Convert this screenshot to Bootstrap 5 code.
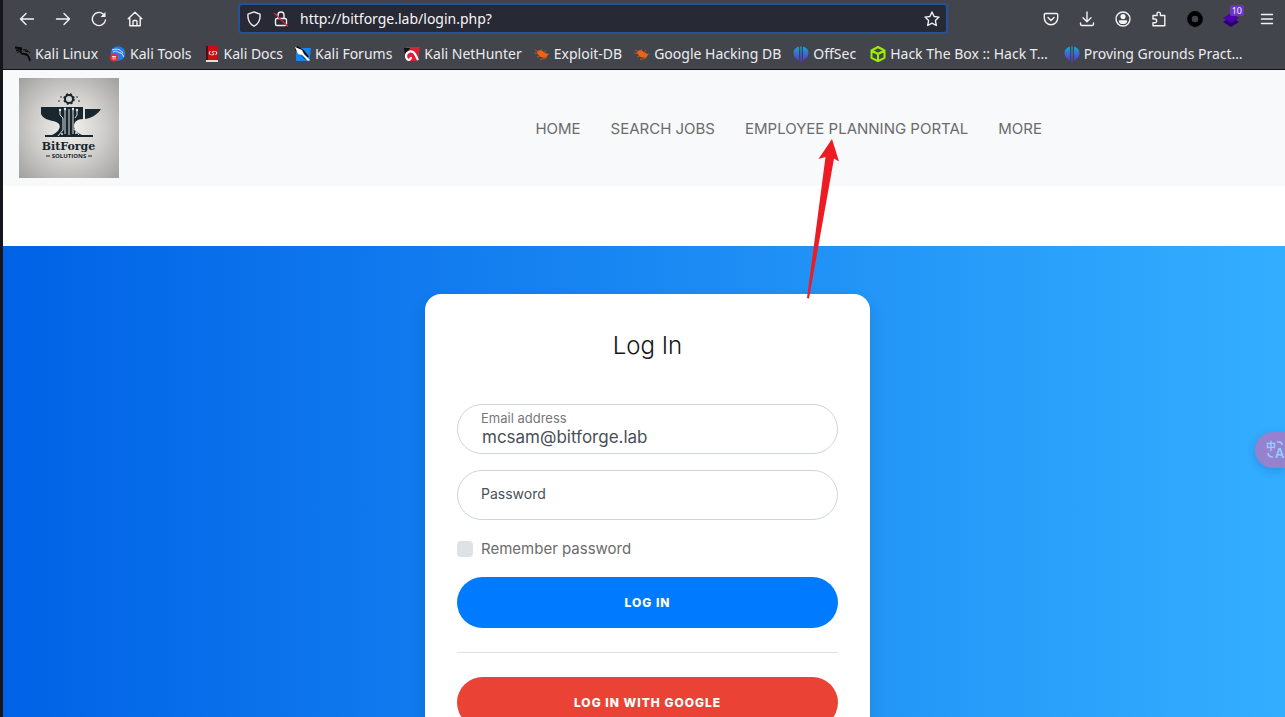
<!DOCTYPE html>
<html lang="en">
<head>
<meta charset="utf-8">
<meta name="viewport" content="width=device-width, initial-scale=1">
<title>BitForge Solutions - Log In</title>
<link rel="stylesheet" href="https://cdn.jsdelivr.net/npm/bootstrap@5.3.0/dist/css/bootstrap.min.css">
<style>
  body { font-family: Inter, sans-serif; color: #6b6b6b; }
  .window-frame { border-left: 3px solid #15161c; }
  .chrome { background: #42454c; border-bottom: 1px solid #111216; font-family: "Noto Sans", sans-serif; color: #f0f0f0; }
  .toolbar { height: 37px; padding: 3px 6px 3px 12px; }
  .tools { column-gap: 12px; }
  .tool { width: 24px; height: 30px; border: 0; padding: 0; background: none; color: #f3f3f4; display: flex; align-items: center; justify-content: center; position: relative; }
  .tool svg, .address svg { width: 16px; height: 16px; }
  svg.line { fill: none; stroke: currentColor; stroke-width: 1.4; stroke-linecap: round; stroke-linejoin: round; }
  .address { height: 31px; margin-left: 91px; margin-right: 91px; padding: 0 6px; gap: 11px; border: 2px solid #24509c; border-radius: 4px; background: #272935; }
  .address input { background: none; border: 0; outline: 0; color: #f6f6f7; font-size: 14px; padding: 0; min-width: 0; }
  .counter { position: absolute; top: 1px; right: -1px; background: #6c35c5; border-radius: 2px; font-size: 9px; line-height: 11px; padding: 0 2px; }
  .bookmarks { height: 32px; padding: 2px 12px 0; gap: 12px; font-size: 14px; line-height: 20px; white-space: nowrap; }
  .bookmarks a { color: #ececee; text-decoration: none; display: flex; align-items: center; gap: 4px; }
  .bookmarks svg { width: 16px; height: 16px; flex: none; }
  .bookmarks .wide { margin: 0 4px 0 2px; }
  .site-nav { background: #f8f9fb; padding: 8px 228px 8px 16px; }
  .logo { width: 100px; height: 100px; display: block; }
  .site-nav .nav-link { color: #6b6b6b; font-size: 15px; line-height: 24px; padding: 9px 15px 7px; }
  .hero { margin-top: 60px; background: linear-gradient(to right, #0062e6, #33aeff); padding: 48px 0 48px 7px; }
  .login-card { width: 445px; border: 0; border-radius: 16px; box-shadow: 0 8px 16px rgba(0,0,0,.12); padding: 32px; }
  .login-card h1 { font-size: 24px; line-height: 40px; font-weight: 300; color: #161616; margin-bottom: 38px; }
  .pill { position: relative; height: 50px; margin-bottom: 16px; }
  .pill input { height: 50px; border: 1px solid #ced4da; border-radius: 32px; padding: 16px 24px 0; font-size: 17px; color: #495057; }
  .pill label { position: absolute; left: 24px; top: 5px; font-size: 13px; line-height: 18px; color: #777; }
  .pill label.resting { top: 14px; font-size: 14px; line-height: 20px; color: #495057; }
  .remember { font-size: 15px; line-height: 26px; margin-bottom: 15px; gap: 8px; }
  .remember input { appearance: none; width: 16px; height: 16px; border-radius: 4px; background: #dee2e6; margin: 0; }
  .remember input:checked { background: #007bff; }
  .action { height: 51px; border: 0; border-radius: 32px; font-size: 12px; font-weight: 800; letter-spacing: 1px; color: #fff; background: #007bff; }
  .action.google { background: #ea4335; }
  .rule { margin: 24px 0; border-color: #888; }
  .arrow { position: absolute; left: 807px; top: 139px; width: 32px; height: 160px; pointer-events: none; }
  .translate { position: absolute; right: 0; top: 432px; width: 30px; height: 36px; border: 0; border-radius: 18px 0 0 18px; padding: 0 0 0 11px; background: #9681cf; box-shadow: 0 3px 10px rgba(0,40,120,.2); overflow: hidden; }
</style>
</head>
<body>
<svg width="0" height="0" class="position-absolute" aria-hidden="true">
  <defs>
    <linearGradient id="offsec" x2="0" y2="1"><stop stop-color="#13a9ca"/><stop offset="1" stop-color="#642bd4"/></linearGradient>
    <radialGradient id="metal" r=".7"><stop stop-color="#f5f4f1"/><stop offset=".5" stop-color="#cfcecb"/><stop offset="1" stop-color="#a0a09f"/></radialGradient>
    <symbol id="os" viewBox="0 0 16 16"><path fill="url(#offsec)" d="M6 .8v13.700C2.500 12.500 .5 10.500 .5 7S3 1.500 6 .8zM7.300 .5h1.400V16H7.300zM10 .8v13.700c3.500-2 5.500-4 5.500-7.500S13 1.500 10 .8z"/></symbol>
    <symbol id="bug" viewBox="0 0 16 16"><path fill="#ed6512" d="M3 6c2-3 5-2 8 1 2 0 3 1 3 2-1 2-3 3-5 2.500C6 11.500 4 9 3 6z"/><path d="M1 4l4 2M0 7l5 .5M3 11l4-1.500M6 13.500l6-1.500M13 12l-2-2M12 4l-2 3M15.500 8l-3 .500M7 3l1 3" stroke="#d96020" stroke-width=".7"/></symbol>
  </defs>
</svg>
<div class="window-frame vh-100 overflow-hidden d-flex flex-column">
  <header class="chrome">
    <div class="toolbar d-flex align-items-center">
      <div class="tools d-flex">
        <button class="tool" aria-label="Back"><svg class="line" viewBox="0 0 16 16"><path d="M14.500 8H1.500M7 2.500L1.500 8 7 13.500"/></svg></button>
        <button class="tool" aria-label="Forward"><svg class="line" viewBox="0 0 16 16"><path d="M1.500 8h13M9 2.500L14.500 8 9 13.500"/></svg></button>
        <button class="tool" aria-label="Reload"><svg class="line" viewBox="0 0 16 16"><path d="M14.500 9A6.600 6.600 0 1 1 12.500 3.200"/><path d="M14.500 1v5h-5z" fill="currentColor" stroke="none"/></svg></button>
        <button class="tool" aria-label="Home"><svg class="line" viewBox="0 0 16 16"><path d="M1.200 7.800L8 1.200l6.800 6.600M2.800 7v7.800h10.400V7M6 14.500v-4a1 1 0 0 1 1-1h2a1 1 0 0 1 1 1v4"/></svg></button>
      </div>
      <div class="address d-flex align-items-center flex-grow-1">
        <svg class="line" viewBox="0 0 16 16"><path d="M8 .9l6 2.300c.5 5-1 9.300-6 12-5-2.700-6.500-7-6-12z"/></svg>
        <svg class="line" viewBox="0 0 16 16"><rect x="2.500" y="7.500" width="11" height="7" rx="1.500"/><path d="M5 7V4a3 3 0 0 1 6 0v3"/><path d="M1.500 2.500l13 12.500" stroke="#e2204b"/></svg>
        <input class="flex-grow-1" type="text" value="http://bitforge.lab/login.php?" aria-label="Address">
        <svg class="line" viewBox="0 0 16 16"><path d="M8 1l2.100 4.500 4.900.6-3.600 3.400.9 5L8 12.100l-4.300 2.400.9-5L1 6.100l4.900-.6z"/></svg>
      </div>
      <div class="tools d-flex">
        <button class="tool" aria-label="Pocket"><svg class="line" viewBox="0 0 16 16"><path d="M2.500 2.500h11a1.200 1.200 0 0 1 1.200 1.200V7a6.700 6.700 0 0 1-13.400 0V3.700a1.200 1.200 0 0 1 1.200-1.200zM5 6.500l3 3 3-3"/></svg></button>
        <button class="tool" aria-label="Downloads"><svg class="line" viewBox="0 0 16 16"><path d="M8 1v9.500M4 6.800l4 4 4-4M1.500 12v1a1.500 1.500 0 0 0 1.500 1.500h10a1.500 1.500 0 0 0 1.500-1.500v-1"/></svg></button>
        <button class="tool" aria-label="Account"><svg class="line" viewBox="0 0 16 16"><circle cx="8" cy="8" r="7"/><circle cx="8" cy="5.600" r="1.900" fill="currentColor"/><path fill="currentColor" d="M4.500 9.900h7c0 1.600-1.700 2.400-3.500 2.400s-3.500-.8-3.500-2.400z"/></svg></button>
        <button class="tool" aria-label="Extensions"><svg class="line" viewBox="0 0 16 16"><path d="M2 7V4.500h4V2.800a1.700 1.700 0 0 1 3.400 0v1.700h4.400v10.300H2v-3h1.800a1.800 1.800 0 0 0 0-3.800H2z"/></svg></button>
        <button class="tool" aria-label="Proxy"><svg viewBox="0 0 16 16"><circle cx="8" cy="8" r="5.600" fill="none" stroke="#000" stroke-width="4.600"/></svg></button>
        <button class="tool" aria-label="Technology profiler"><svg viewBox="0 0 16 16"><path fill="#280071" d="M0 11l8-5 8 5-8 5z"/><path fill="#4c00b0" d="M0 7l8-5 8 5-8 5z"/></svg><span class="counter">10</span></button>
        <button class="tool" aria-label="Menu"><svg class="line" viewBox="0 0 16 16"><path d="M2.500 3.500h11M2.500 8h11M2.500 12.500h11"/></svg></button>
      </div>
    </div>
    <nav class="bookmarks d-flex align-items-center">
      <a href="#"><svg viewBox="0 0 16 16" fill="none" stroke="#080808"><path d="M0 1.500l7 1M1 4.500l6-1.500M6 2.500C5 6 6 8 9 8c4 0 5 3 6 7" stroke-width="1.800"/><path d="M8 4c3-1 5 1 7 3M10 5l3 .5M2 6.500L6 5"/></svg>Kali Linux</a>
      <a href="#"><svg viewBox="0 0 16 16"><circle cx="8" cy="7.500" r="7.300" fill="#2b78ee"/><path d="M2 4c6-2 9 0 11 3M3 6c4-2 5 1 8 1 2 1 2 3 3 4" fill="none" stroke="#d9eaff"/><circle cx="4" cy="11.500" r="4" fill="#e52e32"/><path d="M2 10.500h4M3.200 10.500v3M5 10.500v3" stroke="#fff" stroke-width=".8"/></svg>Kali Tools</a>
      <a href="#"><svg viewBox="0 0 16 16"><path fill="#c90e13" d="M2 0h12v14H2z"/><path fill="#520b0d" d="M2 0h2v14H2z"/><path fill="#e4dede" d="M2 14h12v2H2z"/><path d="M6.500 5L5 7l1.500 2M11.500 5L13 7l-1.500 2M10.500 5.500C7.500 5 8 7 9 7s1.500 2.500-1.500 1.800" fill="none" stroke="#fff"/></svg>Kali Docs</a>
      <a href="#"><svg viewBox="0 0 16 16"><path fill="#1684ef" d="M1 2h15l-1.500 13H1z"/><path d="M1 2l6 4 5 6" fill="none" stroke="#111" stroke-width="5"/><path fill="#fff" d="M0 1l7 3 2 4 6 6-2 1-6-6-4-1z"/></svg>Kali Forums</a>
      <a href="#"><svg viewBox="0 0 16 16"><path fill="#d92235" d="M3 1h13l-2 14H3z"/><path fill="#111" d="M0 2h6L4 6 1 9z"/><path d="M3 13C0 8 5 4 9 6c2 1 3 4 5 8M3 13c2 2 4 0 4-2" fill="none" stroke="#fff" stroke-width="2.200"/></svg>Kali NetHunter</a>
      <a href="#"><svg><use href="#bug"/></svg>Exploit-DB</a>
      <a href="#"><svg><use href="#bug"/></svg>Google Hacking DB</a>
      <a href="#"><svg><use href="#os"/></svg>OffSec</a>
      <a href="#" class="wide"><svg viewBox="0 0 16 16" fill="none" stroke="#9fef00" stroke-width="2" stroke-linejoin="round"><path d="M8 1l6.500 3.500v7.300L8 15.200l-6.500-3.400V4.500zM1.500 4.500L8 8l6.500-3.500M8 8v7"/></svg>Hack The Box :: Hack T…</a>
      <a href="#"><svg><use href="#os"/></svg>Proving Grounds Pract…</a>
    </nav>
  </header>

  <nav class="site-nav d-flex align-items-center">
    <a href="#" aria-label="BitForge Solutions">
      <svg class="logo" viewBox="0 0 100 100">
        <path fill="url(#metal)" d="M0 0h100v100H0z"/>
        <g fill="#17262f">
          <path d="M22 29h42v12c-6 0-9 3-9 7 0 5 4 7 8 9h11v2H26v-2h7c7-3 10-9 6-12-4-3-14-2-17-9z"/>
          <path d="M66 31h16c-3 5-9 9-16 10z"/>
          <circle cx="50" cy="21" r="4" fill="none" stroke="#17262f" stroke-width="2"/>
          <circle cx="50" cy="21" r="5" fill="none" stroke="#17262f" stroke-width="1.500" stroke-dasharray="2 2"/>
          <circle cx="42" cy="19" r=".8"/><circle cx="40" cy="23" r=".8"/><circle cx="58" cy="19" r=".8"/><circle cx="60" cy="23" r=".8"/>
        </g>
        <path d="M50 31v26M46 32v24M54 32v24M41 33v4l3 3v12l-5 6M58 33v4l-2 3M60 57l-5-6" fill="none" stroke="#dedfdc"/>
        <g fill="#e6e6e3"><circle cx="41" cy="32" r="1.200"/><circle cx="46" cy="31" r="1.200"/><circle cx="54" cy="31" r="1.200"/><circle cx="58" cy="32" r="1.200"/><circle cx="43" cy="56" r="1"/><circle cx="57" cy="55" r="1"/></g>
        <text x="49.500" y="72" text-anchor="middle" font-family="DejaVu Serif, serif" font-weight="700" font-size="11" fill="#17262f">BitForge</text>
        <text x="50" y="80" text-anchor="middle" font-family="Open Sans, sans-serif" font-weight="700" font-size="6" fill="#17262f">SOLUTIONS</text>
        <path d="M27 78h4M69 78h4" stroke="#17262f"/>
      </svg>
    </a>
    <div class="nav ms-auto flex-nowrap">
      <a class="nav-link" href="#">HOME</a>
      <a class="nav-link" href="#">SEARCH JOBS</a>
      <a class="nav-link" href="#">EMPLOYEE PLANNING PORTAL</a>
      <a class="nav-link" href="#">MORE</a>
    </div>
  </nav>

  <main class="hero flex-grow-1">
    <form class="card login-card mx-auto">
      <h1 class="text-center">Log In</h1>
      <div class="pill">
        <input class="form-control" id="email" type="email" value="mcsam@bitforge.lab">
        <label for="email">Email address</label>
      </div>
      <div class="pill">
        <input class="form-control" id="password" type="password">
        <label class="resting" for="password">Password</label>
      </div>
      <div class="remember d-flex align-items-center">
        <input type="checkbox" id="remember">
        <label for="remember">Remember password</label>
      </div>
      <button class="btn action" type="submit">LOG IN</button>
      <hr class="rule">
      <button class="btn action google" type="button">LOG IN WITH GOOGLE</button>
    </form>
  </main>
</div>

<svg class="arrow" viewBox="0 0 32 160" aria-hidden="true"><path fill="#ed1c24" d="M25 0L11.500 20l7-2L0 159l2 .500L27 19.500l5 3z"/></svg>
<button class="translate" aria-label="Translate">
  <svg class="d-block" width="19" height="20" viewBox="0 0 19 20" fill="none" stroke="#94cfff" stroke-width="1.600">
    <text x="0" y="10" font-family="Noto Sans CJK SC, sans-serif" font-weight="700" font-size="10" fill="#94cfff" stroke="none">中</text>
    <text x="9" y="18" font-family="Inter, sans-serif" font-weight="600" font-size="13" fill="#94cfff" stroke="none">A</text>
    <path d="M11 2h2q3 0 3 3M2 13q0 4 5 4"/>
  </svg>
</button>
<script src="https://cdn.jsdelivr.net/npm/bootstrap@5.3.0/dist/js/bootstrap.bundle.min.js"></script>
</body>
</html>
